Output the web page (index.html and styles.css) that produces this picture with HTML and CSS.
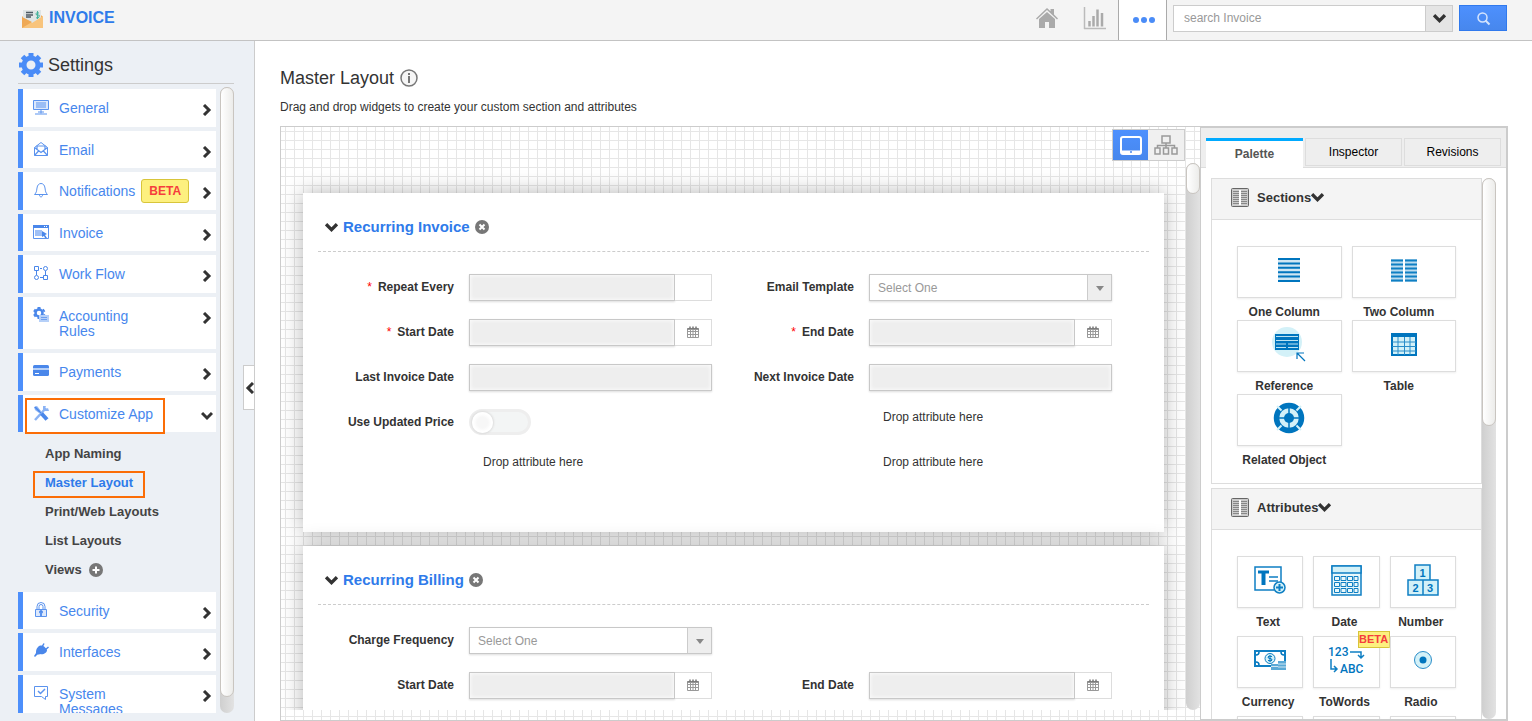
FILE: index.html
```html
<!DOCTYPE html>
<html lang="en">

<head>
  <meta charset="UTF-8">
  <meta name="viewport" content="width=device-width, initial-scale=1">
  <title>Invoice - Master Layout</title>
  <link rel="stylesheet" href="styles.css">
</head>

<body>
  <!-- shared icons -->
  <svg class="sprite" aria-hidden="true">
    <symbol id="right" viewBox="0 0 12 12"><path d="M3 1l5 5-5 5" fill="none" stroke="#333" stroke-width="3"/></symbol>
    <symbol id="down" viewBox="0 0 12 12"><path d="M1 3l5 5 5-5" fill="none" stroke="#333" stroke-width="3"/></symbol>
    <symbol id="left" viewBox="0 0 12 12"><path d="M9 1L4 6l5 5" fill="none" stroke="#333" stroke-width="3"/></symbol>
    <symbol id="remove" viewBox="0 0 14 14">
      <circle cx="7" cy="7" r="7" fill="#777"/>
      <path d="M4.500 4.500l5 5M9.500 4.500l-5 5" stroke="#fff" stroke-width="2"/>
    </symbol>
    <symbol id="calendar" viewBox="0 0 12 12">
      <path d="M.5 2.500h11v9H.5zM.5 5.500h11M.5 8.500h11M3.500 4v7.500M6 4v7.500M8.500 4v7.500" fill="none" stroke="#999"/>
      <path d="M.5 3h11M3 .5v2.500M6 .5v2.500M9 .5v2.500" stroke="#777" stroke-width="1.500"/>
    </symbol>
    <symbol id="columns" viewBox="0 0 18 19">
      <rect x=".5" y=".5" width="17" height="18" rx="1" fill="#ccc" stroke="#666"/>
      <path d="M2 3.500h6M2 5.500h6M2 7.500h6M2 9.500h6M2 11.500h6M2 13.500h6M2 15.500h6M10 3.500h6M10 5.500h6M10 7.500h6M10 9.500h6M10 11.500h6M10 13.500h6M10 15.500h6" stroke="#888"/>
      <path d="M9 2v15" stroke="#fff" stroke-width="2"/>
    </symbol>
  </svg>

  <header class="topbar">
    <a href="#" class="brand">
      <svg width="22" height="22" viewBox="0 0 22 22">
        <path d="M0 10l3-3h15l3 3v11H0z" fill="#f3a953"/>
        <path d="M1 3h18v14H1z" fill="#dfe5e5"/>
        <path d="M4 5.500h7M4 8h7M4 10h5" stroke="#4d5a63" stroke-width="1.500"/>
        <path d="M17 6q-3-1-3 .8t2 1.200 1 2-3 .6M15.500 4v8" fill="none" stroke="#45b39c"/>
        <path d="M0 10l10 6L21 9v12H0z" fill="#f8c47c"/>
        <path d="M0 10v11l10-6z" fill="#efa955"/>
      </svg>
      INVOICE
    </a>
    <nav class="top-nav">
      <a href="#" aria-label="Home">
        <svg width="22" height="22" viewBox="0 0 22 22" fill="#aaa">
          <path d="M11 5l8 7v9h-6v-6H9v6H3v-9z"/>
          <path d="M0 11.500L11 1l3.500 3.300V2h3.500v5.500l4 4-1 1L11 3 1 12.500z"/>
        </svg>
      </a>
      <a href="#" aria-label="Reports">
        <svg width="22" height="23" viewBox="0 0 22 23" fill="none" stroke="#aaa">
          <path d="M.5 0v22M0 21.500h22" stroke="#bbb" stroke-width="1.500"/>
          <path d="M5.500 14v5.500M9.500 9v10.500M13.500 2.500v17M18 6v13.500" stroke-width="2.500"/>
        </svg>
      </a>
      <a href="#" class="active" aria-label="More">
        <svg width="22" height="6" viewBox="0 0 22 6" fill="#4a8cf7">
          <circle cx="3" cy="3" r="3"/><circle cx="11" cy="3" r="3"/><circle cx="19" cy="3" r="3"/>
        </svg>
      </a>
    </nav>
    <form class="search">
      <input type="text" placeholder="search Invoice" aria-label="search Invoice">
      <button type="button" class="search-more" aria-label="Search options"><svg width="13" height="13"><use href="#down"/></svg></button>
      <button type="button" class="search-btn" aria-label="Search">
        <svg width="13" height="13" viewBox="0 0 13 13" fill="none" stroke="#d5e4fd" stroke-width="1.500">
          <circle cx="5.500" cy="5.500" r="4.500"/><path d="M8.500 8.500l4 4" stroke-width="2"/>
        </svg>
      </button>
    </form>
  </header>

  <div class="page">
    <aside class="sidebar">
      <h2>
        <svg width="24" height="24" viewBox="0 0 24 24">
          <circle cx="12" cy="12" r="7" fill="none" stroke="#4a8cf7" stroke-width="5"/>
          <path d="M12 0v4M12 20v4M0 12h4M20 12h4M3.500 3.500l3 3M17.500 17.500l3 3M20.500 3.500l-3 3M6.500 17.500l-3 3" stroke="#4a8cf7" stroke-width="5"/>
        </svg>
        Settings
      </h2>
      <div class="scroll-area">
        <ul class="menu">
          <li><a href="#">
            <svg class="icon" viewBox="0 0 16 16" fill="none" stroke="#5b93ee"><path d="M.5 1.500h15v9H.5z" fill="#dce8fc"/><path d="M3 4h10M3 6h10M3 8h10M8 10.500v4M5 13h6M2 15h12" /></svg>
            <span class="name">General</span><svg class="arrow"><use href="#right"/></svg></a></li>
          <li><a href="#">
            <svg class="icon" viewBox="0 0 16 16" fill="none" stroke="#5b93ee"><path d="M1.500 6.500L8 1.500l6.500 5v8h-13z"/><path d="M1.500 6.500l6.500 5 6.500-5M1.500 14.500l4.500-5M14.500 14.500l-4.500-5M4 8V5h8v3" stroke-width="1.200"/></svg>
            <span class="name">Email</span><svg class="arrow"><use href="#right"/></svg></a></li>
          <li><a href="#">
            <svg class="icon" viewBox="0 0 16 16" fill="none" stroke="#5b93ee"><path d="M1.500 12.500c2-2 2-3 2.500-6.500.4-3 2-4.500 4-4.500S11.600 3 12 6c.5 3.500.5 4.500 2.500 6.500zM6.500 13c0 2.500 3 2.500 3 0"/></svg>
            <span class="name">Notifications</span><span class="beta">BETA</span><svg class="arrow"><use href="#right"/></svg></a></li>
          <li><a href="#">
            <svg class="icon" viewBox="0 0 16 16"><path d="M.5 1.500h15v13H.5z" fill="#fff" stroke="#5b93ee"/><path d="M0 1h16v3H0z" fill="#4a87ea"/><path d="M2 6h7v6H2z" fill="#9fc0f6"/><path d="M9 7l5 3-2 1 2 3h-2l-1-2-2 1z" fill="#4a87ea"/><path d="M11 2.500h1M13 2.500h1" stroke="#fff"/></svg>
            <span class="name">Invoice</span><svg class="arrow"><use href="#right"/></svg></a></li>
          <li><a href="#">
            <svg class="icon" viewBox="0 0 16 16" fill="none" stroke="#4a87ea"><path d="M1.500 1.500h4v4h-4zM10.500 10.500h4v4h-4z"/><circle cx="12.500" cy="3.500" r="2"/><circle cx="3.500" cy="12.500" r="2"/><path d="M7 3.500h2M3.500 6v4M12.500 6v4M7 12.500h3"/></svg>
            <span class="name">Work Flow</span><svg class="arrow"><use href="#right"/></svg></a></li>
          <li><a href="#">
            <svg class="icon" viewBox="0 0 16 16"><circle cx="6" cy="6" r="3.500" fill="none" stroke="#4a87ea" stroke-width="2.500"/><path d="M6 0v2M6 10v2M1 3l1.500 1M10 8l1.500 1M1 9l1.500-1M10 4l1.500-1" stroke="#4a87ea" stroke-width="3"/><path d="M6 8h10v7H6z" fill="#b6d0f8"/><path d="M8 10.500h6M8 12.500h6" stroke="#6da0f0"/></svg>
            <span class="name">Accounting Rules</span><svg class="arrow"><use href="#right"/></svg></a></li>
          <li><a href="#">
            <svg class="icon" viewBox="0 0 16 16"><rect y="2" width="16" height="11" rx="1.500" fill="#4a87ea"/><path d="M0 6h16" stroke="#b6d0f8" stroke-width="2"/><path d="M2 10.500h4" stroke="#fff"/></svg>
            <span class="name">Payments</span><svg class="arrow"><use href="#right"/></svg></a></li>
          <li class="open"><a href="#">
            <svg class="icon" viewBox="0 0 16 16" fill="none"><path d="M2 15L13 3" stroke="#8bb3f4" stroke-width="2.500"/><path d="M10 1v4l2 1h4l-1-3-2 1-1-1 1-2z" fill="#8bb3f4"/><path d="M1 2l3-1 4 5-2 2-4-3z" fill="#8bb3f4"/><path d="M2 2l6 6" stroke="#4a87ea" stroke-width="1.500"/><path d="M8.500 8.500l5.500 6" stroke="#4a87ea" stroke-width="4"/></svg>
            <span class="name">Customize App</span><svg class="arrow"><use href="#down"/></svg></a></li>
          <li class="sub">
            <ul>
              <li><a href="#">App Naming</a></li>
              <li><a href="#" class="current">Master Layout</a></li>
              <li><a href="#">Print/Web Layouts</a></li>
              <li><a href="#">List Layouts</a></li>
              <li><a href="#">Views</a>
                <button type="button" class="plain" aria-label="Add view"><svg width="14" height="14" viewBox="0 0 14 14"><circle cx="7" cy="7" r="7" fill="#777"/><path d="M7 3.500v7M3.500 7h7" stroke="#fff" stroke-width="2"/></svg></button></li>
            </ul>
          </li>
          <li><a href="#">
            <svg class="icon" viewBox="0 0 16 16" fill="none" stroke="#5b93ee"><path d="M2.500 7.500h11v7h-11z" fill="#dce8fc"/><path d="M4 7V4.500a4 4 0 0 1 8 0V7M6 7V4.500a2 2 0 0 1 4 0V7"/><circle cx="8" cy="10" r="1.500" fill="#4a87ea"/><path d="M8 10v4" stroke-width="2"/></svg>
            <span class="name">Security</span><svg class="arrow"><use href="#right"/></svg></a></li>
          <li><a href="#">
            <svg class="icon" viewBox="0 0 16 16" fill="#4a87ea"><path d="M5 4c3-3 7-1 9 3 0 3-4 5-7 4-1 1-2 0-3 1l-2 2-1-1 2-3c0-2 0-4 2-6z"/><path d="M9 4l2-3.500M12 7l3.500-3" stroke="#4a87ea" stroke-width="1.500"/></svg>
            <span class="name">Interfaces</span><svg class="arrow"><use href="#right"/></svg></a></li>
          <li><a href="#">
            <svg class="icon" viewBox="0 0 16 16" fill="none" stroke="#5b93ee"><path d="M1.500 1.500h13v10h-2v3l-4-3h-7z"/><path d="M5 6l2.500 2.500L12 4" stroke-width="1.500"/></svg>
            <span class="name">System Messages</span><svg class="arrow"><use href="#right"/></svg></a></li>
        </ul>
        <div class="scrollbar menu-bar"><div class="thumb"></div></div>
      </div>
      <button type="button" class="collapse" aria-label="Collapse menu"><svg width="12" height="12"><use href="#left"/></svg></button>
    </aside>

    <main>
      <h1>Master Layout
        <svg width="18" height="18" viewBox="0 0 18 18" fill="#f6f6f6" stroke="#777"><circle cx="9" cy="9" r="8" stroke-width="1.500"/><path d="M9 4v2M9 7v7" stroke-width="2"/></svg>
      </h1>
      <p class="hint">Drag and drop widgets to create your custom section and attributes</p>

      <div class="builder">
        <section class="canvas">
          <div class="modes">
            <button type="button" class="on" aria-label="Form view">
              <svg width="22" height="19" viewBox="0 0 22 19"><rect x="1" y="1" width="20" height="17" rx="2" fill="none" stroke="#fff" stroke-width="2"/><path d="M1 14.500h20v3H1z" fill="#fff"/><circle cx="11" cy="16" r="1" fill="#4a87ea"/></svg>
            </button>
            <button type="button" aria-label="Tree view">
              <svg width="24" height="20" viewBox="0 0 24 20" fill="none" stroke="#999"><path d="M8 1h8v7H8zM1 13h5v6H1zM9.500 13h5v6h-5zM18 13h5v6h-5zM12 8v5M3.500 13v-2.500h17V13" stroke-width="1.500"/></svg>
            </button>
          </div>
          <div class="stage">
            <div class="cards">
              <section class="card">
                <header>
                  <button type="button" class="plain" aria-label="Collapse"><svg width="13" height="13"><use href="#down"/></svg></button>
                  <h3>Recurring Invoice</h3>
                  <button type="button" class="plain" aria-label="Remove section"><svg width="14" height="14"><use href="#remove"/></svg></button>
                </header>
                <div class="fields">
                  <div class="field">
                    <label for="repeat"><span class="req">*</span>Repeat Every</label>
                    <div class="group"><input type="text" id="repeat" readonly><span class="addon"></span></div>
                  </div>
                  <div class="field">
                    <label for="template">Email Template</label>
                    <div class="select"><select id="template"><option>Select One</option></select></div>
                  </div>
                  <div class="field">
                    <label for="start"><span class="req">*</span>Start Date</label>
                    <div class="group"><input type="text" id="start" readonly><button type="button" class="addon" aria-label="Pick date"><svg width="12" height="12"><use href="#calendar"/></svg></button></div>
                  </div>
                  <div class="field">
                    <label for="end"><span class="req">*</span>End Date</label>
                    <div class="group"><input type="text" id="end" readonly><button type="button" class="addon" aria-label="Pick date"><svg width="12" height="12"><use href="#calendar"/></svg></button></div>
                  </div>
                  <div class="field">
                    <label for="last">Last Invoice Date</label>
                    <div class="group"><input type="text" id="last" readonly></div>
                  </div>
                  <div class="field">
                    <label for="next">Next Invoice Date</label>
                    <div class="group"><input type="text" id="next" readonly></div>
                  </div>
                  <div class="field">
                    <label for="updated">Use Updated Price</label>
                    <input type="checkbox" class="toggle" id="updated">
                  </div>
                  <div class="field"><span></span><div class="drop">Drop attribute here</div></div>
                  <div class="field"><span></span><div class="drop">Drop attribute here</div></div>
                  <div class="field"><span></span><div class="drop">Drop attribute here</div></div>
                </div>
              </section>

              <section class="card">
                <header>
                  <button type="button" class="plain" aria-label="Collapse"><svg width="13" height="13"><use href="#down"/></svg></button>
                  <h3>Recurring Billing</h3>
                  <button type="button" class="plain" aria-label="Remove section"><svg width="14" height="14"><use href="#remove"/></svg></button>
                </header>
                <div class="fields">
                  <div class="field">
                    <label for="charge">Charge Frequency</label>
                    <div class="select"><select id="charge"><option>Select One</option></select></div>
                  </div>
                  <div class="field"></div>
                  <div class="field">
                    <label for="bstart">Start Date</label>
                    <div class="group"><input type="text" id="bstart" readonly><button type="button" class="addon" aria-label="Pick date"><svg width="12" height="12"><use href="#calendar"/></svg></button></div>
                  </div>
                  <div class="field">
                    <label for="bend">End Date</label>
                    <div class="group"><input type="text" id="bend" readonly><button type="button" class="addon" aria-label="Pick date"><svg width="12" height="12"><use href="#calendar"/></svg></button></div>
                  </div>
                </div>
              </section>
            </div>
            <div class="scrollbar stage-bar"><div class="thumb"></div></div>
          </div>
        </section>

        <aside class="tools">
          <div class="tabs">
            <button type="button" class="active">Palette</button>
            <button type="button">Inspector</button>
            <button type="button">Revisions</button>
          </div>
          <div class="palette">
            <div class="groups">
              <section class="box">
                <h4><svg width="18" height="19"><use href="#columns"/></svg><span>Sections</span><svg width="13" height="13"><use href="#down"/></svg></h4>
                <div class="tiles two">
                  <div class="tile">
                    <button type="button" aria-labelledby="t1"><svg width="22" height="24" viewBox="0 0 22 24"><path d="M0 0h22v24H0z" fill="#cfe6f3"/><path d="M0 1h22M0 5.500h22M0 9.800h22M0 14.200h22M0 18.500h22M0 23h22" stroke="#0075be" stroke-width="2"/></svg></button>
                    <span id="t1">One Column</span>
                  </div>
                  <div class="tile">
                    <button type="button" aria-labelledby="t2"><svg width="26" height="23" viewBox="0 0 26 23"><path d="M0 0h12v23H0zM14 0h12v23H14z" fill="#bcdcef"/><path d="M0 1.500h12M0 5.500h12M0 9.500h12M0 13.500h12M0 17.500h12M0 21.500h12M14 1.500h12M14 5.500h12M14 9.500h12M14 13.500h12M14 17.500h12M14 21.500h12" stroke="#0f7fc3" stroke-width="2"/></svg></button>
                    <span id="t2">Two Column</span>
                  </div>
                  <div class="tile">
                    <button type="button" aria-labelledby="t3"><svg width="34" height="36" viewBox="0 0 34 36"><circle cx="15" cy="16" r="15" fill="#d3f1f8"/><path d="M3 8h24v16H3z" fill="#0075be"/><path d="M4 10.500h22M4 14.500h22M4 18h10M16 18h10M4 21.500h10M16 21.500h10" stroke="#bfe4f2" stroke-width="1.200"/><path d="M33 35l-8-8M25 33v-6h7" fill="none" stroke="#0075be" stroke-width="1.200"/></svg></button>
                    <span id="t3">Reference</span>
                  </div>
                  <div class="tile">
                    <button type="button" aria-labelledby="t4"><svg width="26" height="23" viewBox="0 0 26 23"><path d="M1 1h24v21H1z" fill="#d3f1f8" stroke="#0075be" stroke-width="2"/><path d="M0 0h26v4H0z" fill="#0075be"/><path d="M1 9h24M1 13.500h24M1 18h24M7 4v18M13.500 4v18M19 4v18" stroke="#2a8dc9"/></svg></button>
                    <span id="t4">Table</span>
                  </div>
                  <div class="tile">
                    <button type="button" aria-labelledby="t5"><svg width="32" height="32" viewBox="0 0 32 32" fill="none"><circle cx="16" cy="16" r="10" fill="#d3f1f8"/><circle cx="16" cy="16" r="12.500" stroke="#0075be" stroke-width="5.500"/><path d="M4 4l4.500 4.500M28 4l-4.500 4.500M4 28l4.500-4.500M28 28l-4.500-4.500" stroke="#d3f1f8" stroke-width="2"/><circle cx="16" cy="16" r="5" fill="#0075be"/><path d="M16 5v22M5 16h22" stroke="#0075be" stroke-width="1.500"/></svg></button>
                    <span id="t5">Related Object</span>
                  </div>
                </div>
              </section>

              <section class="box">
                <h4><svg width="18" height="19"><use href="#columns"/></svg><span>Attributes</span><svg width="13" height="13"><use href="#down"/></svg></h4>
                <div class="tiles three">
                  <div class="tile">
                    <button type="button" aria-labelledby="a1"><svg width="32" height="28" viewBox="0 0 32 28" fill="none" stroke="#0f7fc3" stroke-width="1.500"><path d="M20 24H1V1h26v15"/><path d="M4 6h11" stroke="#0075be" stroke-width="3"/><path d="M9.500 5v14" stroke="#0075be" stroke-width="4"/><path d="M15 11h9M15 15h9"/><circle cx="25.500" cy="21.500" r="5.500" fill="#d3f1f8"/><path d="M25.500 18v7M22 21.500h7" stroke-width="2"/></svg></button>
                    <span id="a1">Text</span>
                  </div>
                  <div class="tile">
                    <button type="button" aria-labelledby="a2"><svg width="31" height="31" viewBox="0 0 31 31" fill="none" stroke="#0f7fc3" stroke-width="1.500"><path d="M1 1h29v29H1z" fill="#e9f8fb"/><path d="M1 1h29v7H1z" fill="#d3f1f8"/><path d="M3.500 11.500h5v4h-5zM10 11.500h5v4h-5zM16.500 11.500h5v4h-5zM23 11.500h4v4h-4zM3.500 17.500h5v4h-5zM10 17.500h5v4h-5zM16.500 17.500h5v4h-5zM23 17.500h4v4h-4zM3.500 23.500h5v4h-5zM10 23.500h5v4h-5zM16.500 23.500h5v4h-5zM23 23.500h4v4h-4z" stroke-width="1"/></svg></button>
                    <span id="a2">Date</span>
                  </div>
                  <div class="tile">
                    <button type="button" aria-labelledby="a3"><svg width="32" height="32" viewBox="0 0 32 32"><path d="M8 1h15v15H8zM1 16h15v15H1zM16 16h15v15H16z" fill="#d3f1f8" stroke="#0f7fc3" stroke-width="1.500"/><text class="glyph" x="12.500" y="13">1</text><text class="glyph" x="5.500" y="28">2</text><text class="glyph" x="20" y="28">3</text></svg></button>
                    <span id="a3">Number</span>
                  </div>
                  <div class="tile">
                    <button type="button" aria-labelledby="a4"><svg width="32" height="20" viewBox="0 0 32 20"><path d="M1 1h30v15H1z" fill="#fff" stroke="#0f7fc3" stroke-width="2"/><path d="M5 2q0 3-3 3M27 2q0 3 3 3M5 15q0-3-3-3" fill="none" stroke="#0075be" stroke-width="1.500"/><circle cx="16" cy="8.500" r="5" fill="#d3f1f8" stroke="#0f7fc3"/><path d="M18 6.500q-4-1-4 .5t2 1.500 2 1.500-4 .5M16 5v7" fill="none" stroke="#0075be"/><path d="M17 14h7v6h-7zM24 11h8v9h-8z" fill="#5aa9d6"/><path d="M17 16.500h7M24 14h8M24 17h8" stroke="#cfe6f3"/></svg></button>
                    <span id="a4">Currency</span>
                  </div>
                  <div class="tile">
                    <button type="button" aria-labelledby="a5"><svg width="36" height="28" viewBox="0 0 36 28"><text class="word" x="0" y="10">123</text><text class="word" x="12" y="27">ABC</text><path d="M22 6h11v6M30 9l3 3 3-3M3 13v10h5M6 20l3 3-3 3" fill="none" stroke="#0f7fc3" stroke-width="1.500"/></svg></button>
                    <em class="tag">BETA</em>
                    <span id="a5">ToWords</span>
                  </div>
                  <div class="tile">
                    <button type="button" aria-labelledby="a6"><svg width="18" height="18" viewBox="0 0 18 18"><circle cx="9" cy="9" r="8.500" fill="#d3f1f8" stroke="#2a8dc9"/><circle cx="9" cy="9" r="3.500" fill="#0075be"/></svg></button>
                    <span id="a6">Radio</span>
                  </div>
                  <div class="tile"><button type="button" aria-label="Attribute"></button></div>
                  <div class="tile"><button type="button" aria-label="Attribute"></button></div>
                  <div class="tile"><button type="button" aria-label="Attribute"></button></div>
                </div>
              </section>
            </div>
            <div class="scrollbar palette-bar"><div class="thumb"></div></div>
          </div>
        </aside>
      </div>
    </main>
  </div>
</body>

</html>
```
FILE: styles.css
```css
*,
*::before,
*::after {
  box-sizing: border-box;
}

body {
  display: flex;
  flex-direction: column;
  height: 100vh;
  margin: 0;
  overflow: hidden;
  background: #fff;
  color: #333;
  font-family: "Liberation Sans", Arial, sans-serif;
  font-size: 12px;
  line-height: 16px;
}

h1, h2, h3, h4, p, ul {
  margin: 0;
  padding: 0;
}

ul {
  list-style: none;
}

a {
  color: inherit;
  text-decoration: none;
}

input, select, button {
  margin: 0;
  padding: 0;
  border: 0;
  border-radius: 0;
  background: none;
  font-family: inherit;
  font-size: 12px;
}

button {
  cursor: pointer;
}

svg {
  display: block;
  flex: none;
  overflow: visible;
}

.sprite {
  position: absolute;
  width: 0;
  height: 0;
}

.plain {
  display: block;
}

/* top bar */
.topbar {
  display: flex;
  flex: none;
  height: 41px;
  padding: 0 25px 0 22px;
  background: #f4f4f4;
  border-bottom: 1px solid #c3c3c3;
}
.brand {
  display: flex;
  align-items: center;
  gap: 5px;
  height: 35px;
  color: #2f7bea;
  font-size: 16px;
  font-weight: bold;
}
.top-nav {
  display: flex;
  margin-left: auto;
}
.top-nav a {
  display: flex;
  align-items: center;
  justify-content: center;
  width: 48px;
  padding: 0 0 4px 2px;
}
.top-nav .active {
  width: 49px;
  padding-bottom: 0;
  background: #fff;
  border: 1px solid #aaa;
  border-width: 0 1px;
}
.search {
  display: flex;
  align-items: flex-start;
  padding: 5px 0 0 6px;
}
.search input {
  width: 253px;
  height: 27px;
  padding: 0 10px 2px;
  background: #fff;
  border: 1px solid #ccc;
}
.search input::placeholder {
  color: #999;
}
.search-more,
.search-btn {
  display: flex;
  align-items: center;
  justify-content: center;
}
.search-more {
  width: 27px;
  height: 27px;
  background: #e5e5e5;
  border: 1px solid #ccc;
  border-left: 0;
}
.search-btn {
  width: 48px;
  height: 26px;
  margin-left: 6px;
  background: linear-gradient(#4d90fe, #4787ed);
  border: 1px solid #3079ed;
}

/* sidebar */
.page {
  display: flex;
  flex: 1;
  min-height: 0;
}
.sidebar {
  position: relative;
  display: flex;
  flex-direction: column;
  flex: none;
  width: 255px;
  padding: 0 20px 8px 18px;
  background: #ecf0f5;
  border-right: 1px solid #ccc;
}
.sidebar h2 {
  display: flex;
  align-items: center;
  gap: 5px;
  flex: none;
  height: 43px;
  padding: 6px 0 0 1px;
  border-bottom: 1px solid #ccc;
  font-size: 18px;
  font-weight: normal;
}
.scroll-area {
  display: flex;
  flex: 1;
  gap: 4px;
  min-height: 0;
  padding-top: 3px;
}
.menu {
  flex: 1;
  margin-top: 2px;
  overflow: hidden;
}
.menu > li {
  position: relative;
  margin-bottom: 4px;
}
.menu > li > a {
  display: flex;
  align-items: flex-start;
  min-height: 37px;
  padding: 12px 3px 10px 10px;
  background: #fff;
  border-left: 5px solid #4d8ffb;
  color: #4787ed;
  font-size: 14px;
  line-height: 15px;
}
.menu > li:nth-child(odd) > a {
  min-height: 38px;
}
.menu .icon {
  width: 16px;
  height: 16px;
  margin-right: 10px;
  margin-top: -2px;
}
.menu .name {
  max-width: 90px;
}
.menu .open .name {
  max-width: none;
}
.menu .arrow {
  width: 12px;
  height: 12px;
  margin: 3px 0 0 auto;
}
.beta {
  height: 24px;
  margin: -5px 0 -5px 6px;
  padding: 0 7px;
  background: #fdf07f;
  border: 1px solid #d8c53a;
  border-radius: 3px;
  color: #f53d3d;
  font-size: 12px;
  font-weight: bold;
  line-height: 22px;
}
.menu .open::after {
  content: "";
  position: absolute;
  left: 7px;
  top: 3px;
  width: 140px;
  height: 36px;
  border: 2px solid #fb6d06;
  pointer-events: none;
}
.sub {
  padding: 3px 0 4px;
}
.sub li {
  display: flex;
  align-items: center;
  gap: 7px;
  height: 29px;
  padding-left: 27px;
  color: #444;
  font-size: 13px;
  font-weight: bold;
}
.sub .current {
  position: relative;
  color: #2f7bea;
}
.sub .current::after {
  content: "";
  position: absolute;
  inset: -4px -12px -7px;
  border: 2px solid #fb6d06;
}
.collapse {
  position: absolute;
  right: 0;
  top: 324px;
  display: flex;
  align-items: center;
  width: 11px;
  height: 45px;
  overflow: hidden;
  background: #fff;
  border: 1px solid #ccc;
  border-right: 0;
}

.scrollbar {
  flex: none;
  width: 14px;
  background: linear-gradient(90deg, #cfcfcf, #e2e2e2);
  border-radius: 7px;
}
.thumb {
  background: linear-gradient(90deg, #fff, #ececea);
  border: 1px solid #c9c5c0;
  border-radius: 7px;
}
.menu-bar {
  padding-bottom: 16px;
}
.menu-bar .thumb {
  height: 100%;
}
.stage-bar .thumb {
  height: 31px;
}
.palette-bar .thumb {
  height: 248px;
}

/* main */
main {
  display: flex;
  flex: 1;
  flex-direction: column;
  min-width: 0;
  padding: 27px 24px 0 25px;
}
h1 {
  display: flex;
  align-items: center;
  gap: 6px;
  font-size: 18px;
  font-weight: normal;
  line-height: 20px;
}
.hint {
  margin: 11px 0;
}
.builder {
  display: flex;
  flex: 1;
  min-height: 0;
}
.canvas {
  display: flex;
  flex: 1;
  flex-direction: column;
  min-width: 0;
  padding: 2px 0 10px;
  background-image: linear-gradient(#e6e6e6 1px, transparent 1px), linear-gradient(90deg, #e6e6e6 1px, transparent 1px);
  background-size: 9px 9px;
  background-position: 4px 4px;
  border: 1px solid #ccc;
  border-right: 0;
}
.modes {
  display: flex;
  align-self: flex-end;
  margin: 0 15px 2px 0;
  border: 1px solid #ccc;
}
.modes button {
  display: flex;
  align-items: center;
  justify-content: center;
  width: 36px;
  height: 30px;
  background: #f0f0f0;
}
.modes .on {
  width: 35px;
  background: linear-gradient(#4d90fe, #4787ed);
}
.stage {
  display: flex;
  flex: 1;
  min-height: 0;
}
.cards {
  flex: 1;
  padding: 30px 22px 0;
  overflow: hidden;
}
.card {
  margin-bottom: 14px;
  padding: 0 15px 33px;
  background: #fff;
  box-shadow: 0 0 20px rgba(0, 0, 0, 0.3);
}
.card header {
  display: flex;
  align-items: center;
  gap: 5px;
  height: 59px;
  padding: 10px 7px 0;
  border-bottom: 1px dashed #ccc;
}
h3 {
  color: #2f7bea;
  font-size: 15px;
}
.fields {
  display: grid;
  grid-template-columns: 1fr 1fr;
  padding: 22px 31px 0 0;
}
.field {
  display: grid;
  grid-template-columns: 34% 1fr;
  height: 45px;
}
.field label {
  line-height: 26px;
  font-weight: bold;
  text-align: right;
}
.req {
  margin-right: 6px;
  color: #f00;
  font-weight: normal;
}
.group,
.select,
.toggle {
  margin: 0 6px 0 15px;
}
.drop {
  padding-left: 29px;
}
.group {
  display: flex;
  height: 27px;
}
.group input {
  flex: 1;
  min-width: 0;
  background: #eee;
  border: 1px solid #c8c8c8;
  box-shadow: inset 0 0 4px #fff, 0 1px 2px #ddd;
}
.addon {
  display: flex;
  align-items: center;
  justify-content: center;
  width: 37px;
  padding-bottom: 2px;
  background: #fff;
  border: 1px solid #ddd;
  border-left: 0;
}
.select {
  position: relative;
  height: 27px;
}
.select select {
  width: 100%;
  height: 27px;
  padding: 0 33px 0 8px;
  appearance: none;
  background: linear-gradient(#ccc, #ccc) right 23px top / 1px 100% no-repeat, linear-gradient(#eee, #eee) right / 23px 100% no-repeat, #fff;
  border: 1px solid #c8c8c8;
  box-shadow: 0 1px 2px #ddd;
  color: #999;
}
.select::after {
  content: "";
  position: absolute;
  right: 8px;
  top: 12px;
  border: 4px solid transparent;
  border-top: 5px solid #888;
  pointer-events: none;
}
.toggle {
  appearance: none;
  width: 62px;
  height: 26px;
  background: #f3f5f5;
  border: 3px solid #eee;
  border-radius: 13px;
}
.toggle::before {
  content: "";
  display: block;
  width: 21px;
  height: 21px;
  background: radial-gradient(#f7f7f7 35%, #fff 60%);
  border-radius: 50%;
  box-shadow: 0 0 2px 1px #ddd;
}

/* palette */
.tools {
  display: flex;
  flex: none;
  flex-direction: column;
  width: 308px;
  border: 2px solid #ccc;
  border-left-width: 1px;
}
.tabs {
  display: grid;
  grid-template-columns: 1fr 1fr 1fr;
  gap: 2px;
  flex: none;
  height: 40px;
  padding: 10px 5px 0;
  background: #eee;
  border-bottom: 1px solid #ddd;
}
.tabs button {
  height: 28px;
  border: 1px solid #ddd;
  color: #000;
}
.tabs .active {
  height: 30px;
  padding-bottom: 2px;
  background: #fff;
  border: 0;
  border-top: 3px solid #0af;
  color: #555;
  font-weight: bold;
}
.palette {
  display: flex;
  flex: 1;
  min-height: 0;
  padding: 10px 10px 0;
}
.groups {
  flex: 1;
  overflow: hidden;
}
.box {
  margin-bottom: 4px;
  border: 1px solid #ddd;
}
.box h4 {
  display: flex;
  align-items: center;
  height: 41px;
  padding: 0 19px 4px;
  background: #f4f4f4;
  border-bottom: 1px solid #ddd;
  font-size: 13px;
}
.box h4 span {
  margin-left: 8px;
  padding-top: 2px;
}
.tiles {
  display: grid;
  padding: 26px 25px 15px 15px;
}
.two {
  grid-template-columns: 1fr 1fr;
}
.three {
  grid-template-columns: 1fr 1fr 1fr;
  row-gap: 6px;
}
.tile {
  position: relative;
  display: flex;
  flex-direction: column;
  text-align: center;
}
.tile button {
  display: flex;
  align-items: center;
  justify-content: center;
  height: 52px;
  margin-left: 10px;
  padding-bottom: 4px;
  background: #fff;
  border: 1px solid #ddd;
  box-shadow: 0 1px 2px #eee;
}
.tile span {
  margin-top: 6px;
  font-weight: bold;
}
.three span {
  padding-left: 6px;
}
.tag {
  position: absolute;
  right: -10px;
  top: -5px;
  width: 32px;
  height: 17px;
  background: #fdf07f;
  border: 1px solid #d8c53a;
  color: #f53d3d;
  font-size: 11px;
  font-style: normal;
  font-weight: bold;
  line-height: 15px;
}
.glyph {
  fill: #0075be;
  font-size: 11px;
  font-weight: bold;
}
.word {
  fill: #0075be;
  font-family: Roboto, sans-serif;
  font-size: 12px;
  font-weight: 500;
}
```
